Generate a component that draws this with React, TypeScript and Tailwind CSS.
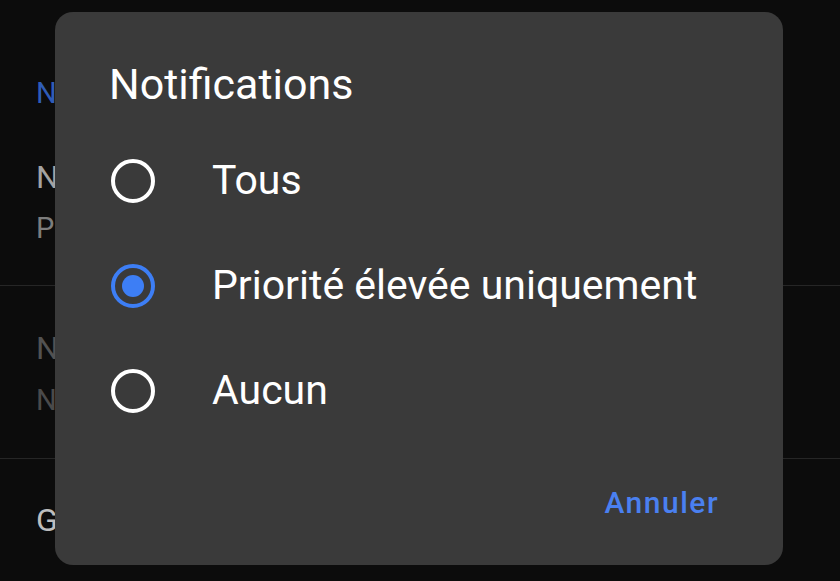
import { useState } from 'react';

const options = ['Tous', 'Priorité élevée uniquement', 'Aucun'];

function Radio({ checked }: { checked: boolean }) {
  return (
    <span
      className={
        'flex items-center justify-center w-[44px] h-[44px] rounded-full border-[4px] ' +
        (checked ? 'border-[#3d7ef5]' : 'border-white')
      }
    >
      {checked && <span className="w-[22px] h-[22px] rounded-full bg-[#3d7ef5]" />}
    </span>
  );
}

export default function App() {
  const [value, setValue] = useState(1);

  return (
    <div
      className="relative w-[840px] h-[581px] overflow-hidden bg-[#0c0c0c]"
      style={{ fontFamily: 'Roboto, "Liberation Sans", sans-serif' }}
    >
      {/* settings list behind the scrim */}
      <div className="pl-[36px] pt-[74px]">
        <p className="text-[29px] text-[#2f5cb8] leading-[38px]">Notifications</p>
        <div className="pt-[41px] pb-[37px]">
          <p className="text-[32px] text-[#a3a3a3] leading-[48px]">Notifications de l'appli</p>
          <p className="mt-[7px] text-[29px] text-[#7d7d7d] leading-[40px]">Priorité élevée</p>
        </div>
        <div className="h-px bg-[#262626] -ml-[36px]" />
        <div className="pt-[38px] pb-[38px]">
          <p className="text-[32px] text-[#525252] leading-[48px]">Notifications</p>
          <p className="mt-[8px] text-[29px] text-[#4a4a4a] leading-[40px]">Non</p>
        </div>
        <div className="h-px bg-[#262626] -ml-[36px]" />
        <div className="pt-[37px]">
          <p className="text-[32px] text-[#bdbdbd] leading-[48px]">Général</p>
        </div>
      </div>

      {/* dialog */}
      <div className="absolute left-[55px] top-[12px] w-[728px] h-[553px] rounded-[18px] bg-[#3a3a3a] flex flex-col">
        <h2 className="pl-[54px] pt-[47px] text-[43px] leading-[50px] text-white">Notifications</h2>
        <div className="mt-[19px] flex flex-col">
          {options.map((label, i) => (
            <button
              key={label}
              onClick={() => setValue(i)}
              className="h-[105px] flex items-center pl-[56px] text-left"
            >
              <Radio checked={value === i} />
              <span className="ml-[57px] text-[41px] text-white leading-none">{label}</span>
            </button>
          ))}
        </div>
        <div className="mt-auto mb-[40px] flex justify-end pr-[64px]">
          <button className="text-[30px] font-medium tracking-[1.5px] text-[#4a80f0]">Annuler</button>
        </div>
      </div>
    </div>
  );
}
